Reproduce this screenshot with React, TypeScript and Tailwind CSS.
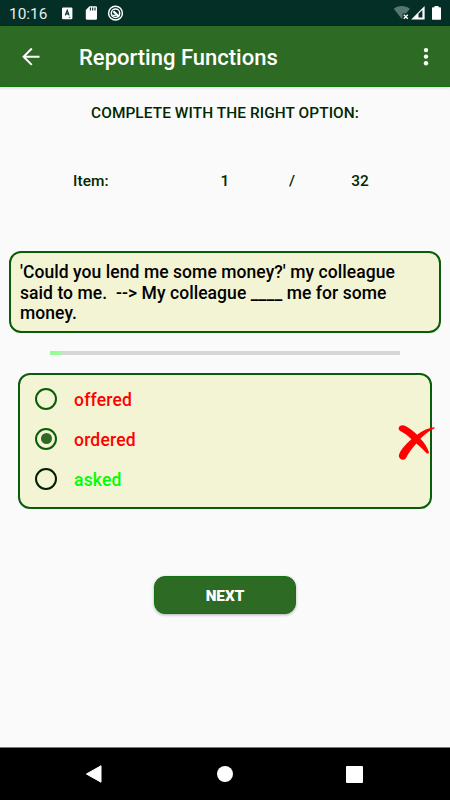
import clsx from 'clsx';

interface Option {
  label: string;
  correct: boolean;
  checked: boolean;
}

const options: Option[] = [
  { label: 'offered', correct: false, checked: false },
  { label: 'ordered', correct: false, checked: true },
  { label: 'asked', correct: true, checked: false },
];

const currentItem = 1;
const totalItems = 32;

function StatusBar() {
  return (
    <div className="flex h-[26px] items-center bg-[#032f27] text-white">
      <span className="ml-[9px] w-[53px] pt-[2px] text-[15.4px] leading-[24px] text-[#e6eceb]">10:16</span>
      <svg className="h-[26px] w-[64px]" viewBox="0 0 64 26">
        <rect x="0" y="7.6" width="10.4" height="11.6" rx="1.2" fill="#fff" />
        <path d="M3.3 15.4 5.2 10.4 7.1 15.4M3.9 13.8h2.6" fill="none" stroke="#032f27" strokeWidth="1.2" />
        <path d="M6.8 17.3h1.6" stroke="#032f27" strokeWidth="0.8" />
        <path d="M27.5 6.3h6.3a1.2 1.2 0 0 1 1.2 1.2v11a1.3 1.3 0 0 1-1.3 1.3h-8.6a1.3 1.3 0 0 1-1.3-1.3v-8.600z" fill="#fff" />
        <path d="M28.4 7.4v3M30.7 7.4v3M33 7.4v3" stroke="#032f27" strokeWidth="1.1" />
        <circle cx="53.5" cy="13.2" r="6.9" fill="none" stroke="#fff" strokeWidth="1.5" />
        <circle cx="53.5" cy="13.2" r="4.2" fill="none" stroke="#fff" strokeWidth="1.5" />
        <path d="m51.4 11.2 5.6 5.5" stroke="#fff" strokeWidth="2.3" />
        <path d="M50.3 15.3h3.8" stroke="#fff" strokeWidth="1.2" />
      </svg>
      <svg className="mr-[6px] ml-auto h-[26px] w-[51px]" viewBox="0 0 51 26">
        <path d="M.8 8.7C5.2 5 12.4 5 16.8 8.7L8.8 19z" fill="#567770" />
        <path d="M9.6 13.5h6v6h-6z" fill="#032f27" />
        <path d="m10.8 14.8 4 4M14.8 14.8l-4 4" stroke="#fff" strokeWidth="1.4" />
        <path d="M18.2 19.4 31.6 6v13.4z" fill="#fff" />
        <path d="M25.5 17.5v-3.7l3.9-3.9v7.6z" fill="#032f27" />
        <path d="M39 8.2q0-.9.9-.9h1.6V6h4v1.3h1.6q.9 0 .9.9v10.7q0 .9-.9.9h-7.2q-.9 0-.9-.9z" fill="#fff" />
      </svg>
    </div>
  );
}

function AppBar() {
  return (
    <header className="relative flex h-[61px] items-center border-b border-[#147114] bg-[#2d6b24] text-white shadow-[0_1px_3px_rgba(0,0,0,0.14)]">
      <svg className="ml-[21px] h-5 w-5" viewBox="0 0 20 20" fill="none" stroke="#fff" strokeWidth="2">
        <path d="M18.5 10.7H2.5M10.8 2.5l-8.2 8.2 8.2 8.2" />
      </svg>
      <h1 className="ml-[38px] pt-[4px] text-[22px] leading-[28px] font-medium">Reporting Functions</h1>
      <svg className="mr-[20px] ml-auto h-5 w-2" viewBox="0 0 8 20" fill="#fff">
        <circle cx="4" cy="4.1" r="2.2" />
        <circle cx="4" cy="10.6" r="2.2" />
        <circle cx="4" cy="17.2" r="2.2" />
      </svg>
    </header>
  );
}

function Radio({ option }: { option: Option }) {
  return (
    <div
      className={clsx(
        'flex h-[22px] w-[22px] items-center justify-center rounded-full border-2',
        option.correct ? 'border-[#041c04]' : 'border-[#0a5c0a]',
      )}
    >
      {option.checked && <div className="h-[11px] w-[11px] rounded-full bg-[#2d6b24]" />}
    </div>
  );
}

function NavigationBar() {
  return (
    <nav className="mt-auto flex h-[53px] items-center border-t border-[#777] bg-black pl-[85px]">
      <svg className="h-5 w-[18px]" viewBox="0 0 18 20">
        <path d="M1.4 10 16 1.8v16.4z" fill="#fff" stroke="#fff" strokeLinejoin="round" />
      </svg>
      <div className="ml-[114px] h-4 w-4 rounded-full bg-white" />
      <div className="ml-[113px] h-[17px] w-[17px] rounded-[1px] bg-white" />
    </nav>
  );
}

export default function App() {
  return (
    <div className="flex h-[800px] w-[450px] flex-col overflow-hidden bg-[#fafafa] font-['Roboto',sans-serif] text-[#002800]">
      <StatusBar />
      <AppBar />

      <main className="flex flex-col">
        <h2 className="mt-[16px] text-center text-[15.4px] leading-[20px] font-medium tracking-[0.09px]">
          COMPLETE WITH THE RIGHT OPTION:
        </h2>

        <div className="mt-[48px] flex text-[15.4px] leading-[20px] font-medium tracking-[0.1px]">
          <span className="ml-[73px] w-[119px]">Item:</span>
          <span className="w-[66px] text-center">{currentItem}</span>
          <span className="w-[68px] text-center">/</span>
          <span className="w-[68px] text-center">{totalItems}</span>
        </div>

        <div className="mx-[9px] mt-[60px] h-[82px] rounded-[12px] border-2 border-[#0a5c0a] bg-[#f3f4d4] pt-[9px] pl-[9px] text-[17.5px] leading-[20.5px] font-medium tracking-[0.06px] whitespace-pre text-black">
          {"'Could you lend me some money?' my colleague\nsaid to me.  --> My colleague ____ me for some\nmoney."}
        </div>

        {/* Quiz progress */}
        <div className="mx-[50px] mt-[18px] h-1 bg-[#d6d6d6]">
          <div className="h-full bg-[#98fb98]" style={{ width: `${(currentItem / totalItems) * 100}%` }} />
        </div>

        <div className="relative mx-[18px] mt-[18px] flex h-[136px] flex-col rounded-[12px] border-2 border-[#0a5c0a] bg-[#f3f4d4] pt-[4.6px] pl-[15px]">
          {options.map((option) => (
            <div key={option.label} className="flex h-[39.6px] items-center">
              <Radio option={option} />
              <span
                className={clsx(
                  'ml-[17px] pt-[2px] text-[17.5px] leading-[20px] font-medium tracking-[0.2px]',
                  option.correct ? 'text-[#00ff00]' : 'text-[#ff0000]',
                )}
              >
                {option.label}
              </span>
            </div>
          ))}

          {/* Wrong answer mark, hangs over the card's edge */}
          <svg className="absolute top-[48.5px] -right-[6px] h-[38px] w-[38px]" viewBox="0 0 38 38">
            <path
              d="M.7 4.1C1.3 1 5 .6 7.9 2.3c4 2.1 7.7 5.2 11.2 8.5C24.4 6.7 29.7 4.2 36 3.3c.8 0 .9.9.2 1.3-5.3 2.6-9.7 6.1-13.8 10.1 4 4.1 6.8 8.4 8.5 13.2.3 1.5-1.4 2.1-2.6 1-3.1-3.1-6.5-6.4-10-9.3-4.1 4.6-7.5 9.5-10.5 14.6-1.3 2.4-6.5 2.1-7-2.1.7-5.6 6.8-11.6 12.6-16.8C9.9 11.8 6.4 9 2.3 7 1 6.3.5 5.3.7 4.1z"
              fill="#ff0000"
            />
          </svg>
        </div>

        <button className="mt-[67px] h-[38px] w-[142px] self-center rounded-[11px] border border-[#147114] bg-[#2d6b24] pt-[2px] text-[15.3px] font-black text-white shadow-[0_1px_3px_rgba(0,0,0,0.3)]">
          NEXT
        </button>
      </main>

      <NavigationBar />
    </div>
  );
}
